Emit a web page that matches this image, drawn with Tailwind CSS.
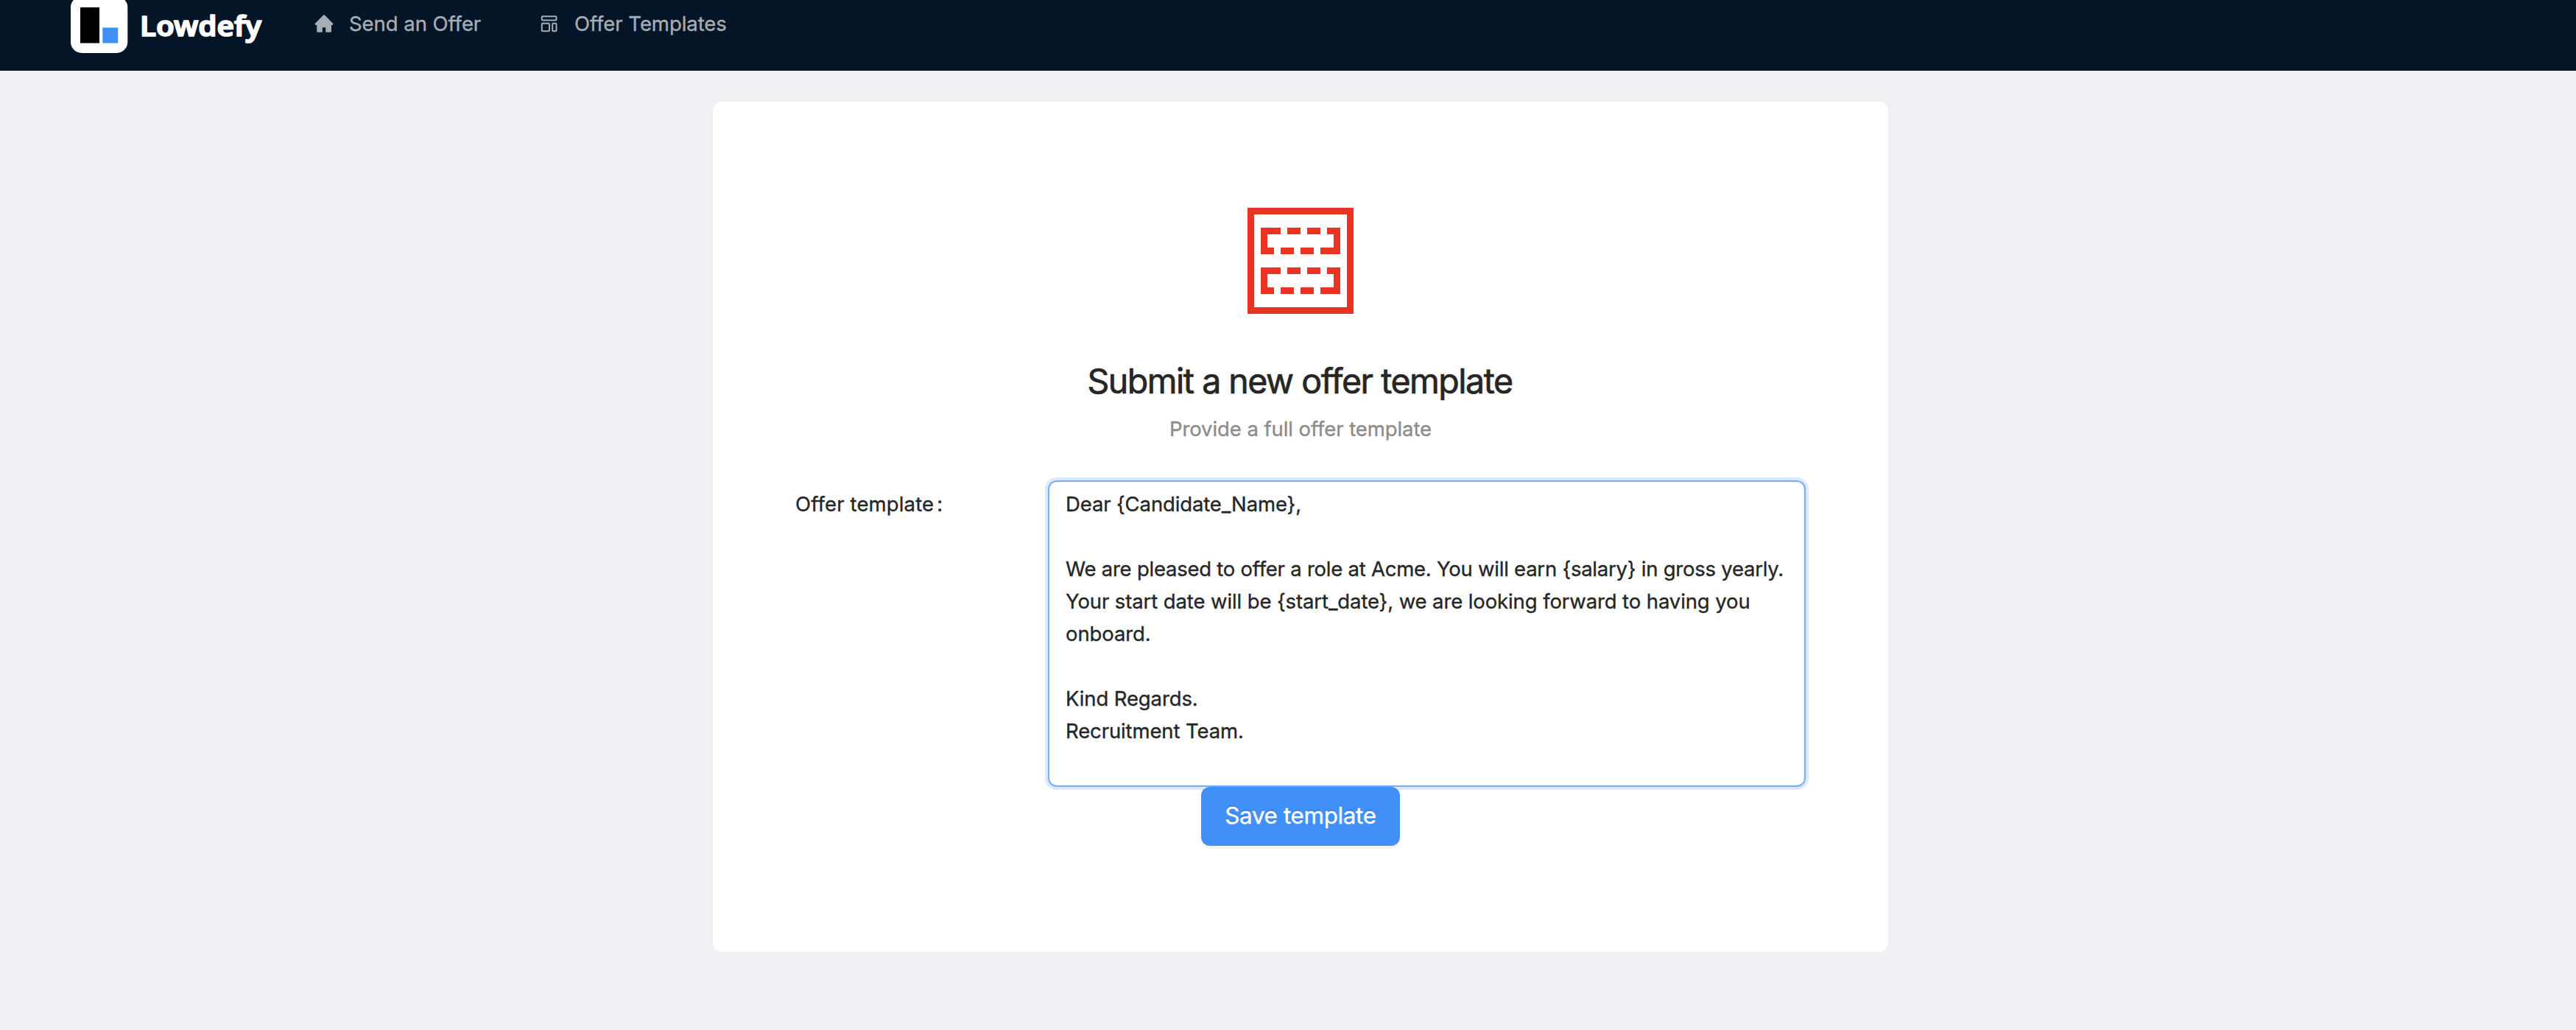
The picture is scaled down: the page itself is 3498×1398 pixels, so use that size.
<!DOCTYPE html>
<html lang="en">
<head>
<meta charset="utf-8">
<title>Lowdefy</title>
<script src="https://cdn.jsdelivr.net/npm/@tailwindcss/browser@4"></script>
</head>
<body class="min-h-[1398px] overflow-hidden bg-[#eff1f5] font-['Inter',sans-serif] text-[27.5px] text-[#262626] [-webkit-text-stroke:0.35px_currentColor]">
<header class="flex h-24 items-start bg-[#041527] pl-24 text-[#a7adb4]">
  <svg class="h-[84px] w-[264px] shrink-0" viewBox="0 0 264 84" role="img" aria-label="Lowdefy">
    <rect x="0" y="-5" width="77.3" height="77" rx="15" fill="#fff"/>
    <rect x="13" y="10" width="26" height="48.5" fill="#000"/>
    <rect x="43.3" y="37.5" width="21" height="21" fill="#4190f7"/>
    <text x="94" y="48.500" textLength="165" lengthAdjust="spacingAndGlyphs" font-family="Noto Sans, sans-serif" font-weight="600" font-size="37" fill="#fff" stroke="#fff" stroke-width="1.700" stroke-linejoin="round">Lowdefy</text>
  </svg>
  <nav class="flex h-16 items-center leading-[64px] tracking-[-0.05px] whitespace-nowrap">
    <a class="ml-[66px] flex w-[228px] items-center">
      <svg class="mr-[20px] h-7 w-7 shrink-0" viewBox="0 0 28 28" fill="currentColor"><path d="M13.1 2.6Q14 1.8 14.900 2.600L26.200 13.900Q27.100 15.500 25.400 16.100H24V25Q24 25.800 23.200 25.800H16.200V19.300H11.800V25.800H5Q4.200 25.800 4.200 25V16.100H2.700Q.9 15.500 1.800 13.900Z"/></svg>
      <span>Send an Offer</span>
    </a>
    <a class="ml-[78px] flex items-center">
      <svg class="mr-[20px] h-7 w-7 shrink-0" viewBox="0 0 28 28" fill="none" stroke="currentColor" stroke-width="2"><rect x="3.800" y="4.200" width="19.700" height="5.300" rx="1"/><rect x="3.800" y="13.700" width="10.200" height="10.500" rx="1"/><rect x="18.200" y="13.700" width="5.300" height="10.500" rx="1"/></svg>
      <span>Offer Templates</span>
    </a>
  </nav>
</header>
<main class="pt-10 pl-[966px]">
  <section class="flex w-[1600px] flex-col items-center rounded-[14px] border-2 border-[#f0f0f0] bg-white px-28 py-36">
    <svg class="mb-12 h-36 w-36" viewBox="0 0 16 16" fill="#e93323" shape-rendering="crispEdges">
      <path fill-rule="evenodd" d="M0 0H16V16H0ZM1 1V15H15V1Z"/>
      <path d="M2 3H5V4H3V6H4V7H2ZM6 3H8V4H6ZM9 3H11V4H9ZM12 3H14V7H11V6H13V4H12ZM5 6H7V7H5ZM8 6H10V7H8Z"/>
      <path d="M2 9H5V10H3V12H4V13H2ZM6 9H8V10H6ZM9 9H11V10H9ZM12 9H14V13H11V12H13V10H12ZM5 12H7V13H5ZM8 12H10V13H8Z"/>
    </svg>
    <h1 class="mr-[2px] h-[86px] text-[46.5px] leading-[86px] tracking-[-1.49px] whitespace-nowrap [-webkit-text-stroke:0.7px_currentColor]">Submit a new offer template</h1>
    <p class="mb-[48px] h-[44px] leading-[44px] tracking-[-0.08px] whitespace-nowrap text-[#8c8c8c]">Provide a full offer template</p>
    <div class="flex w-full items-start">
      <div class="mt-[10px] flex w-1/4 gap-[4px] leading-[44px] tracking-[0.15px]"><span>Offer template</span><span>:</span></div>
      <div class="h-[416px] w-3/4 rounded-[12px] border-2 border-[#78acf9] bg-white px-[22px] pt-2 leading-[44px] whitespace-nowrap shadow-[0_0_0_4px_#dce8fd]">
        <div class="tracking-[-0.13px]">Dear {Candidate_Name},</div>
        <div class="h-11"></div>
        <div class="tracking-[-0.24px]">We are pleased to offer a role at Acme. You will earn {salary} in gross yearly.</div>
        <div class="tracking-[-0.11px]">Your start date will be {start_date}, we are looking forward to having you</div>
        <div class="tracking-[-0.1px]">onboard.</div>
        <div class="h-11"></div>
        <div class="tracking-[-0.12px]">Kind Regards.</div>
        <div class="tracking-[-0.12px]">Recruitment Team.</div>
      </div>
    </div>
    <button class="relative h-20 w-[270px] rounded-[12px] bg-[#4190f7] text-[31.4px] tracking-[-0.35px] whitespace-nowrap text-white shadow-[0_4px_0_rgba(0,0,0,0.045)] [text-shadow:0_-2px_0_rgba(0,0,0,0.12)]">Save template</button>
  </section>
</main>
</body>
</html>
